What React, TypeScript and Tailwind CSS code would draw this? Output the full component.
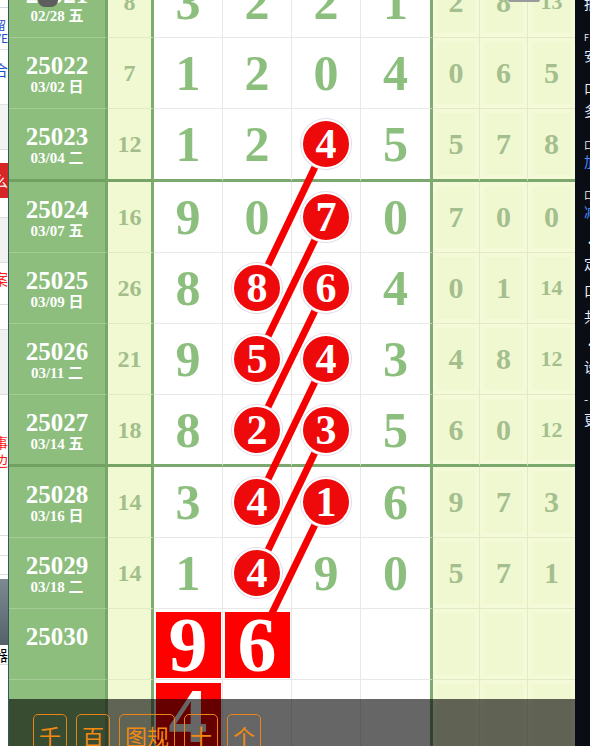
import React from 'react';

type NumCell = number | { c: number } | { s: number } | null;
interface Row {
  id: string;
  d: string;
  sum: string;
  n: NumCell[];
  r: string[];
  thick?: 'a' | 'b';
}

const rows: Row[] = [
  { id: '25021', d: '02/28 五', sum: '8', n: [3, 2, 2, 1], r: ['2', '8', '13'] },
  { id: '25022', d: '03/02 日', sum: '7', n: [1, 2, 0, 4], r: ['0', '6', '5'] },
  { id: '25023', d: '03/04 二', sum: '12', n: [1, 2, { c: 4 }, 5], r: ['5', '7', '8'], thick: 'a' },
  { id: '25024', d: '03/07 五', sum: '16', n: [9, 0, { c: 7 }, 0], r: ['7', '0', '0'] },
  { id: '25025', d: '03/09 日', sum: '26', n: [8, { c: 8 }, { c: 6 }, 4], r: ['0', '1', '14'] },
  { id: '25026', d: '03/11 二', sum: '21', n: [9, { c: 5 }, { c: 4 }, 3], r: ['4', '8', '12'] },
  { id: '25027', d: '03/14 五', sum: '18', n: [8, { c: 2 }, { c: 3 }, 5], r: ['6', '0', '12'], thick: 'b' },
  { id: '25028', d: '03/16 日', sum: '14', n: [3, { c: 4 }, { c: 1 }, 6], r: ['9', '7', '3'] },
  { id: '25029', d: '03/18 二', sum: '14', n: [1, { c: 4 }, 9, 0], r: ['5', '7', '1'] },
  { id: '25030', d: '', sum: '', n: [{ s: 9 }, { s: 6 }, null, null], r: ['', '', ''] },
  { id: '', d: '', sum: '', n: [{ s: 4 }, null, null, null], r: ['', '', ''] },
];

const serif = "font-['Liberation_Serif','Noto_Sans_CJK_SC',serif]";

function NumContent({ v }: { v: NumCell }) {
  if (v === null) return null;
  if (typeof v === 'number') {
    return <span className="text-[50px] leading-none font-bold text-[#8cbf7d]">{v}</span>;
  }
  if ('c' in v) {
    return (
      <div className="relative z-10 w-[50px] h-[50px] rounded-full bg-[#ee0a0a] border-2 border-white ring-1 ring-[#e4dce8] flex items-center justify-center text-white text-[42px] leading-none font-bold">
        {v.c}
      </div>
    );
  }
  return (
    <div className="relative z-10 mt-[3px] w-[65px] h-[66px] bg-[#ff0000] flex items-center justify-center text-white text-[78px] leading-none font-bold">
      {v.s}
    </div>
  );
}

function RowView({ row }: { row: Row }) {
  const h = row.thick === 'a' ? 'h-[73px]' : row.thick === 'b' ? 'h-[72px]' : 'h-[71px]';
  const tb = !!row.thick;
  const dateB = tb ? 'border-b-[3px] border-b-[#72a062]' : 'border-b border-b-[#a5cc96]';
  const sumB = tb ? 'border-b-[3px] border-b-[#76a366]' : 'border-b border-b-[#e1ebc5]';
  const numB = tb ? 'border-b-[3px] border-b-[#7ba86c]' : 'border-b border-b-[#e8e8e8]';
  const rightB = tb ? 'border-b-[3px] border-b-[#7ba86c]' : 'border-b border-b-[#e0eac4]';
  const rightW = ['w-[47px] border-r border-r-[#e2ebc8]', 'w-[48px] border-r border-r-[#e2ebc8]', 'w-[47px]'];
  return (
    <div className={`flex ${h} ${serif}`}>
      <div
        className={`w-[99px] shrink-0 bg-[#8dbe7d] border-r-[3px] border-r-[#79a76a] ${dateB} flex flex-col items-center pt-[15px] text-white font-bold`}
      >
        <div className="text-[25px] leading-[26px]">{row.id}</div>
        {row.d && <div className="text-[15px] leading-[18px] -mt-px">{row.d}</div>}
      </div>
      <div
        className={`w-[46px] shrink-0 bg-[#f1f9d2] border-r-[3px] border-r-[#7faa70] ${sumB} flex items-center justify-center text-[24px] leading-none font-bold text-[#a2bf8b]`}
      >
        {row.sum}
      </div>
      {row.n.map((v, i) => {
        const isSq = v !== null && typeof v === 'object' && 's' in v;
        const w = i === 3 ? 'w-[72px] border-r-[3px] border-r-[#7faa70]' : 'w-[69px] border-r border-r-[#e8e8e8]';
        return (
          <div
            key={i}
            className={`${w} shrink-0 bg-white ${numB} flex justify-center ${isSq ? 'items-start' : 'items-center'}`}
          >
            <NumContent v={v} />
          </div>
        );
      })}
      {row.r.map((v, i) => (
        <div key={i} className={`${rightW[i]} shrink-0 bg-[#f4fad8] ${rightB} flex`}>
          <div
            className={`m-[4px] flex-1 bg-[#f0f8d2] flex items-center justify-center font-bold leading-none text-[#a4bf8d] ${
              v.length > 1 ? 'text-[22px]' : 'text-[30px]'
            }`}
          >
            {v}
          </div>
        </div>
      ))}
    </div>
  );
}

function LeftStrip() {
  return (
    <div className="w-[8px] shrink-0 h-[746px] bg-white overflow-hidden flex flex-col font-['Noto_Sans_CJK_SC',sans-serif]">
      <div className="h-[8px] shrink-0 border-b border-b-[#cdd8e6]" />
      <div className="h-[42px] shrink-0 border-b border-b-[#dde3ea] flex justify-end pt-[10px]">
        <span className="whitespace-nowrap text-[12px] leading-[13px] text-[#1f4fc8]">留<br />VE</span>
      </div>
      <div className="h-[55px] shrink-0 border-b border-b-[#dde3ea] flex justify-end pt-[12px]">
        <span className="whitespace-nowrap text-[15px] leading-[16px] text-[#1f4fc8]">合</span>
      </div>
      <div className="h-[45px] shrink-0 bg-[#f3f3f3] border-b border-b-[#d9dde3]" />
      <div className="h-[13px] shrink-0" />
      <div className="h-[35px] shrink-0 bg-[#d62626] flex justify-end items-center">
        <span className="whitespace-nowrap text-[15px] leading-none text-white">么</span>
      </div>
      <div className="h-[20px] shrink-0 border-b border-b-[#dedede]" />
      <div className="h-[45px] shrink-0 bg-[#f2f2f2] border-b border-b-[#dedede]" />
      <div className="h-[42px] shrink-0 flex justify-end pt-[8px] border-b border-b-[#dedede]">
        <span className="whitespace-nowrap text-[15px] leading-none text-[#ff1a1a]">案</span>
      </div>
      <div className="h-[25px] shrink-0 border-b border-b-[#dedede]" />
      <div className="h-[65px] shrink-0 bg-[#f1f1f1] border-b border-b-[#dedede]" />
      <div className="h-[140px] shrink-0 flex flex-col items-end pt-[38px]">
        <span className="whitespace-nowrap text-[14px] leading-[18px] text-[#ff1a1a]">事</span>
        <span className="whitespace-nowrap text-[14px] leading-[18px] text-[#ff1a1a]">边</span>
      </div>
      <div className="h-[20px] shrink-0 border-t border-t-[#dedede]" />
      <div className="h-[19px] shrink-0 border-t border-t-[#dedede]" />
      <div className="h-[5px] shrink-0 border-t border-t-[#dedede]" />
      <div className="h-[66px] shrink-0 bg-gradient-to-b from-[#7d8a94] to-[#55606a]" />
      <div className="h-[20px] shrink-0 flex justify-end items-center border-b border-b-[#dedede]">
        <span className="whitespace-nowrap text-[15px] leading-none text-black">器</span>
      </div>
    </div>
  );
}

const rightItems: { t: string; h: string; cls: string }[] = [
  { t: '批', h: 'h-[34px] -mt-[4px]', cls: 'text-[14px] text-[#eef2ff]' },
  { t: 'F', h: 'h-[18px]', cls: 'text-[9px] text-[#e8ecf5]' },
  { t: '安', h: 'h-[32px]', cls: 'text-[14px] text-[#dfe8ff]' },
  { t: '口', h: 'h-[23px]', cls: 'text-[13px] text-[#f0f0f0]' },
  { t: '多', h: 'h-[34px]', cls: 'text-[14px] text-[#e8eeff]' },
  { t: '口', h: 'h-[17px]', cls: 'text-[10px] text-[#f0f0f0]' },
  { t: '加', h: 'h-[33px]', cls: 'text-[14px] text-[#4d8dff]' },
  { t: '口', h: 'h-[17px]', cls: 'text-[10px] text-[#f0f0f0]' },
  { t: '减', h: 'h-[31px]', cls: 'text-[14px] text-[#4d8dff]' },
  { t: '•', h: 'h-[21px]', cls: 'text-[12px] text-[#f0f0f0]' },
  { t: '定', h: 'h-[27px]', cls: 'text-[14px] text-[#e8eeff]' },
  { t: '口', h: 'h-[26px]', cls: 'text-[14px] text-[#f0f0f0]' },
  { t: '共', h: 'h-[28px]', cls: 'text-[14px] text-[#e8eeff]' },
  { t: '•', h: 'h-[22px]', cls: 'text-[12px] text-[#f0f0f0]' },
  { t: '设', h: 'h-[32px]', cls: 'text-[14px] text-[#e8eeff]' },
  { t: '-', h: 'h-[21px]', cls: 'text-[12px] text-[#f0f0f0]' },
  { t: '更', h: 'h-[30px]', cls: 'text-[14px] text-[#e8eeff]' },
];

function RightStrip() {
  return (
    <div className="w-[15px] shrink-0 h-[746px] bg-[#0a0d14] overflow-hidden flex flex-col pl-[9px] font-['Noto_Sans_CJK_SC',sans-serif]">
      {rightItems.map((it, i) => (
        <div key={i} className={`${it.h} shrink-0 whitespace-nowrap leading-[15px] ${it.cls}`}>
          {it.t}
        </div>
      ))}
    </div>
  );
}

const lines: [number, number, number, number][] = [
  [317, 144, 248, 288],
  [317, 217, 248, 359],
  [317, 288, 248, 429.5],
  [317, 359, 248, 502],
  [317, 429.5, 248, 573],
  [317, 502, 248, 644],
];

const buttons = ['千', '百', '图规', '十', '个'];

export default function App() {
  return (
    <div className="w-[590px] h-[746px] overflow-hidden flex bg-white">
      <LeftStrip />
      <div className="w-px shrink-0 bg-[#2f5a58]" />
      <div className="relative w-[566px] shrink-0 h-[746px] overflow-hidden bg-white">
        <div className="-mt-[33px]">
          {rows.map((r, i) => (
            <RowView key={i} row={r} />
          ))}
        </div>
        <svg className="absolute left-0 top-0 pointer-events-none" width="566" height="746">
          {lines.map(([x1, y1, x2, y2], i) => (
            <line key={i} x1={x1} y1={y1} x2={x2} y2={y2} stroke="#f40000" strokeWidth={7} />
          ))}
        </svg>
        <div className="absolute left-[29px] -top-[7px] w-[20px] h-[14px] rounded-full bg-[#5e5e5e] z-10" />
        <div className="absolute left-[499px] top-0 w-[32px] h-[2px] rounded-b bg-[#9a9a9a] z-10" />
        <div className="absolute left-0 right-0 top-[699px] h-[47px] bg-black/60 z-20 flex gap-[9px] pl-[24px] pt-[15px] font-['Noto_Sans_CJK_SC',sans-serif]">
          {buttons.map((b) => (
            <div
              key={b}
              className="h-[40px] px-[5px] pt-[5px] border border-[#e8841a] rounded-[5px] text-[22px] leading-[30px] text-[#f28a12] whitespace-nowrap"
            >
              {b}
            </div>
          ))}
        </div>
      </div>
      <RightStrip />
    </div>
  );
}
